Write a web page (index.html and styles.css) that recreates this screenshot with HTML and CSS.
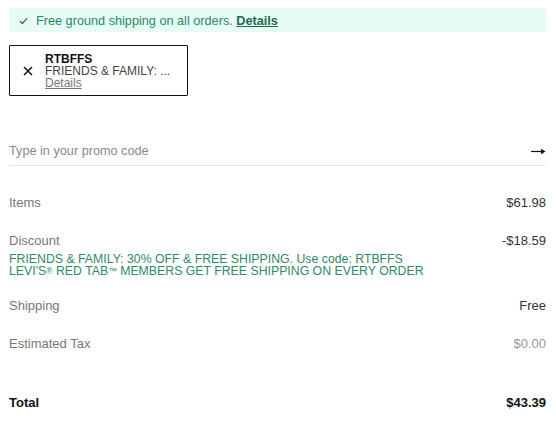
FILE: index.html
```html
<!DOCTYPE html>
<html>
<head>
<meta charset="utf-8">
<link rel="stylesheet" href="styles.css">
</head>
<body>
<div class="summary">
  <div class="banner">
    <svg class="check" width="9" height="8" viewBox="0 0 9 8"><path d="M1 4.2 L3.4 6.4 L8 1.4" fill="none" stroke="#2c7a5c" stroke-width="1.4"/></svg>
    <span class="banner-text">Free ground shipping on all orders. <a class="banner-link">Details</a></span>
  </div>
  <div class="promo-applied">
    <svg class="close" width="10" height="10" viewBox="0 0 10 10"><path d="M1 1 L9 9 M9 1 L1 9" stroke="#111" stroke-width="1.5"/></svg>
    <div class="promo-info">
      <div class="promo-code">RTBFFS</div>
      <div class="promo-desc">FRIENDS &amp; FAMILY: ...</div>
      <a class="promo-details">Details</a>
    </div>
  </div>
  <div class="promo-input">
    <span class="placeholder">Type in your promo code</span>
    <svg class="arrow" width="15" height="7" viewBox="0 0 15 7"><path d="M0 3.5 H12" stroke="#111" stroke-width="1.2"/><path d="M10 0.8 L14.5 3.5 L10 6.2 Z" fill="#111"/></svg>
  </div>
  <div class="row row-items">
    <span class="label">Items</span>
    <span class="value">$61.98</span>
  </div>
  <div class="row row-discount">
    <span class="label">Discount</span>
    <span class="value">-$18.59</span>
  </div>
  <div class="discount-notes">
    <div>FRIENDS &amp; FAMILY: 30% OFF &amp; FREE SHIPPING. Use code: RTBFFS</div>
    <div>LEVI'S<span class="mark">®</span> RED TAB<span class="mark">™</span> MEMBERS GET FREE SHIPPING ON EVERY ORDER</div>
  </div>
  <div class="row row-shipping">
    <span class="label">Shipping</span>
    <span class="value">Free</span>
  </div>
  <div class="row row-tax">
    <span class="label">Estimated Tax</span>
    <span class="value muted">$0.00</span>
  </div>
  <div class="row row-total">
    <span class="label total">Total</span>
    <span class="value total">$43.39</span>
  </div>
</div>
</body>
</html>
```
FILE: styles.css
```css
html, body {
  margin: 0;
  padding: 0;
  background: #fff;
}
body {
  font-family: "Liberation Sans", Arial, sans-serif;
  color: #333;
}
.summary {
  padding: 8px 10px 0 9px;
}
.banner {
  height: 24px;
  background: #e6fcf4;
  display: flex;
  align-items: center;
  padding-left: 10px;
  padding-top: 1px;
  box-sizing: border-box;
  gap: 8px;
  font-size: 12.7px;
  color: #2c8a62;
}
.banner-link {
  font-weight: bold;
  text-decoration: underline;
  color: #1e6b4c;
}
.promo-applied {
  margin-top: 13px;
  width: 179px;
  height: 51px;
  border: 1px solid #111;
  border-radius: 1px;
  display: flex;
  align-items: center;
  padding-left: 13px;
  gap: 12px;
  box-sizing: border-box;
}
.promo-applied .close {
  flex: none;
}
.promo-info {
  font-size: 12px;
  line-height: 12px;
  white-space: nowrap;
}
.promo-code {
  font-weight: bold;
  color: #111;
}
.promo-desc {
  color: #444;
}
.promo-details {
  color: #777;
  text-decoration: underline;
}
.promo-input {
  margin-top: 48px;
  height: 21px;
  border-bottom: 1px solid #e6e6e6;
  display: flex;
  justify-content: space-between;
  align-items: flex-start;
}
.placeholder {
  font-size: 12.7px;
  color: #8a8a8a;
  line-height: 14px;
}
.arrow {
  margin-top: 4px;
}
.row {
  display: flex;
  justify-content: space-between;
  font-size: 13px;
  line-height: 16px;
}
.label {
  color: #777;
}
.value {
  color: #333;
}
.value.muted {
  color: #999;
}
.row-items {
  margin-top: 29px;
}
.row-discount {
  margin-top: 22px;
}
.discount-notes {
  margin-top: 4px;
  font-size: 12.3px;
  line-height: 12px;
  color: #2e8a63;
}
.mark {
  font-size: 0.7em;
  vertical-align: 1px;
}
.row-shipping {
  margin-top: 21px;
}
.row-tax {
  margin-top: 22px;
}
.row-total {
  margin-top: 43px;
}
.total {
  font-weight: bold;
  color: #111;
}
```
